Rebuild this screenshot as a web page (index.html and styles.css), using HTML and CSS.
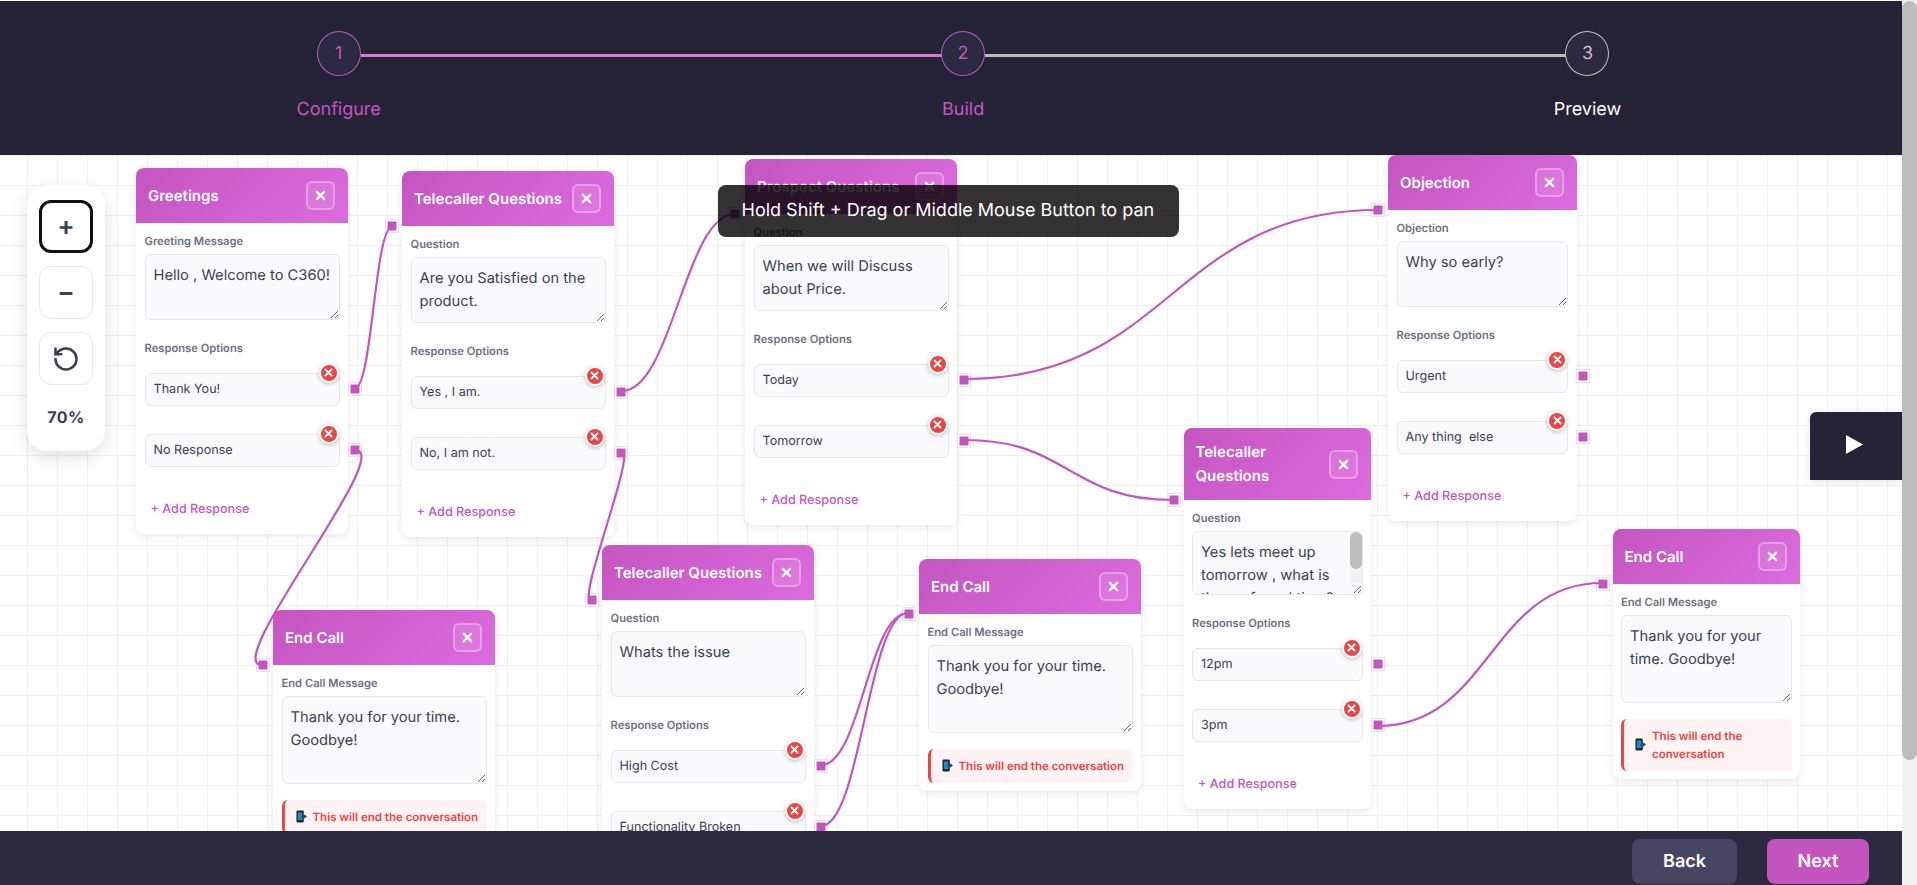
FILE: index.html
```html
<!DOCTYPE html>
<html lang="en">
<head>
    <meta charset="UTF-8">
    <meta name="viewport" content="width=device-width, initial-scale=1.0">
    <title>Call Flow Builder</title>
    <link rel="stylesheet" href="styles.css">
</head>
<body>
    <svg class="sprite" aria-hidden="true">
        <symbol id="icon-x" viewBox="0 0 12 12">
            <path d="M2 2l8 8M10 2l-8 8" fill="none" stroke="currentColor" stroke-width="2.6" stroke-linecap="round"/>
        </symbol>
        <symbol id="icon-phone" viewBox="0 0 12 14">
            <rect x="0.5" y="0.5" width="8" height="13" rx="1.2" fill="#1f2230"/>
            <rect x="2" y="2.5" width="5" height="8.5" fill="#1b8fc4"/>
            <path d="M6 6h3V4.6L12 7l-3 2.4V8H6z" fill="#3a3f4d"/>
        </symbol>
    </svg>

    <div class="page">
        <div class="app">
            <!-- Stepper -->
            <div class="stepper">
                <div class="step step-done">
                    <div class="step-circle">1</div>
                    <div class="step-label">Configure</div>
                </div>
                <div class="step step-active">
                    <div class="step-circle">2</div>
                    <div class="step-label">Build</div>
                </div>
                <div class="step step-todo">
                    <div class="step-circle">3</div>
                    <div class="step-label">Preview</div>
                </div>
            </div>

            <!-- Flow canvas -->
            <div class="canvas">
                <div class="node node-greetings">
                    <div class="node-header">
                        <div class="node-title">Greetings</div>
                        <button class="node-close"><svg class="icon-x"><use href="#icon-x"/></svg></button>
                    </div>
                    <div class="node-body">
                        <label class="field-label">Greeting Message</label>
                        <textarea class="field-text">Hello , Welcome to C360!</textarea>
                        <label class="field-label options-label">Response Options</label>
                        <div class="option">
                            <input class="option-input" type="text" value="Thank You!">
                            <span class="option-remove"><svg class="icon-x-small"><use href="#icon-x"/></svg></span>
                            <span class="port port-out"></span>
                        </div>
                        <div class="option">
                            <input class="option-input" type="text" value="No Response">
                            <span class="option-remove"><svg class="icon-x-small"><use href="#icon-x"/></svg></span>
                            <span class="port port-out"></span>
                        </div>
                        <div class="add-response">+ Add Response</div>
                    </div>
                </div>

                <div class="node node-telecaller-a">
                    <div class="node-header">
                        <span class="port port-in"></span>
                        <div class="node-title">Telecaller Questions</div>
                        <button class="node-close"><svg class="icon-x"><use href="#icon-x"/></svg></button>
                    </div>
                    <div class="node-body">
                        <label class="field-label">Question</label>
                        <textarea class="field-text">Are you Satisfied on the product.</textarea>
                        <label class="field-label options-label">Response Options</label>
                        <div class="option">
                            <input class="option-input" type="text" value="Yes , I am.">
                            <span class="option-remove"><svg class="icon-x-small"><use href="#icon-x"/></svg></span>
                            <span class="port port-out"></span>
                        </div>
                        <div class="option">
                            <input class="option-input" type="text" value="No, I am not.">
                            <span class="option-remove"><svg class="icon-x-small"><use href="#icon-x"/></svg></span>
                            <span class="port port-out"></span>
                        </div>
                        <div class="add-response">+ Add Response</div>
                    </div>
                </div>

                <div class="node node-prospect">
                    <div class="node-header">
                        <span class="port port-in"></span>
                        <div class="node-title">Prospect Questions</div>
                        <button class="node-close"><svg class="icon-x"><use href="#icon-x"/></svg></button>
                    </div>
                    <div class="node-body">
                        <label class="field-label">Question</label>
                        <textarea class="field-text">When we will Discuss about Price.</textarea>
                        <label class="field-label options-label">Response Options</label>
                        <div class="option">
                            <input class="option-input" type="text" value="Today">
                            <span class="option-remove"><svg class="icon-x-small"><use href="#icon-x"/></svg></span>
                            <span class="port port-out"></span>
                        </div>
                        <div class="option">
                            <input class="option-input" type="text" value="Tomorrow">
                            <span class="option-remove"><svg class="icon-x-small"><use href="#icon-x"/></svg></span>
                            <span class="port port-out"></span>
                        </div>
                        <div class="add-response">+ Add Response</div>
                    </div>
                </div>

                <div class="node node-objection">
                    <div class="node-header">
                        <span class="port port-in"></span>
                        <div class="node-title">Objection</div>
                        <button class="node-close"><svg class="icon-x"><use href="#icon-x"/></svg></button>
                    </div>
                    <div class="node-body">
                        <label class="field-label">Objection</label>
                        <textarea class="field-text">Why so early?</textarea>
                        <label class="field-label options-label">Response Options</label>
                        <div class="option">
                            <input class="option-input" type="text" value="Urgent">
                            <span class="option-remove"><svg class="icon-x-small"><use href="#icon-x"/></svg></span>
                            <span class="port port-out"></span>
                        </div>
                        <div class="option">
                            <input class="option-input" type="text" value="Any thing  else">
                            <span class="option-remove"><svg class="icon-x-small"><use href="#icon-x"/></svg></span>
                            <span class="port port-out"></span>
                        </div>
                        <div class="add-response">+ Add Response</div>
                    </div>
                </div>

                <div class="node node-telecaller-b">
                    <div class="node-header">
                        <span class="port port-in"></span>
                        <div class="node-title">Telecaller Questions</div>
                        <button class="node-close"><svg class="icon-x"><use href="#icon-x"/></svg></button>
                    </div>
                    <div class="node-body">
                        <label class="field-label">Question</label>
                        <div class="field-scroll">
                            <textarea class="field-text field-text-short">Yes lets meet up tomorrow , what is the preferred time?</textarea>
                            <div class="field-scrollbar"><div class="field-scrollbar-thumb"></div></div>
                        </div>
                        <label class="field-label options-label">Response Options</label>
                        <div class="option">
                            <input class="option-input" type="text" value="12pm">
                            <span class="option-remove"><svg class="icon-x-small"><use href="#icon-x"/></svg></span>
                            <span class="port port-out"></span>
                        </div>
                        <div class="option">
                            <input class="option-input" type="text" value="3pm">
                            <span class="option-remove"><svg class="icon-x-small"><use href="#icon-x"/></svg></span>
                            <span class="port port-out"></span>
                        </div>
                        <div class="add-response">+ Add Response</div>
                    </div>
                </div>

                <div class="node node-telecaller-c">
                    <div class="node-header">
                        <span class="port port-in"></span>
                        <div class="node-title">Telecaller Questions</div>
                        <button class="node-close"><svg class="icon-x"><use href="#icon-x"/></svg></button>
                    </div>
                    <div class="node-body">
                        <label class="field-label">Question</label>
                        <textarea class="field-text">Whats the issue</textarea>
                        <label class="field-label options-label">Response Options</label>
                        <div class="option">
                            <input class="option-input" type="text" value="High Cost">
                            <span class="option-remove"><svg class="icon-x-small"><use href="#icon-x"/></svg></span>
                            <span class="port port-out"></span>
                        </div>
                        <div class="option">
                            <input class="option-input" type="text" value="Functionality Broken">
                            <span class="option-remove"><svg class="icon-x-small"><use href="#icon-x"/></svg></span>
                            <span class="port port-out"></span>
                        </div>
                        <div class="add-response">+ Add Response</div>
                    </div>
                </div>

                <div class="node node-end-a">
                    <div class="node-header">
                        <span class="port port-in"></span>
                        <div class="node-title">End Call</div>
                        <button class="node-close"><svg class="icon-x"><use href="#icon-x"/></svg></button>
                    </div>
                    <div class="node-body">
                        <label class="field-label">End Call Message</label>
                        <textarea class="field-text field-text-tall">Thank you for your time. Goodbye!</textarea>
                        <div class="end-notice">
                            <svg class="icon-phone"><use href="#icon-phone"/></svg>
                            <span>This will end the conversation</span>
                        </div>
                    </div>
                </div>

                <div class="node node-end-b">
                    <div class="node-header">
                        <span class="port port-in"></span>
                        <div class="node-title">End Call</div>
                        <button class="node-close"><svg class="icon-x"><use href="#icon-x"/></svg></button>
                    </div>
                    <div class="node-body">
                        <label class="field-label">End Call Message</label>
                        <textarea class="field-text field-text-tall">Thank you for your time. Goodbye!</textarea>
                        <div class="end-notice">
                            <svg class="icon-phone"><use href="#icon-phone"/></svg>
                            <span>This will end the conversation</span>
                        </div>
                    </div>
                </div>

                <div class="node node-end-c">
                    <div class="node-header">
                        <span class="port port-in"></span>
                        <div class="node-title">End Call</div>
                        <button class="node-close"><svg class="icon-x"><use href="#icon-x"/></svg></button>
                    </div>
                    <div class="node-body">
                        <label class="field-label">End Call Message</label>
                        <textarea class="field-text field-text-tall">Thank you for your time. Goodbye!</textarea>
                        <div class="end-notice">
                            <svg class="icon-phone"><use href="#icon-phone"/></svg>
                            <span>This will end the conversation</span>
                        </div>
                    </div>
                </div>

                <!-- Connections run over the cards -->
                <svg class="edges" width="1902" height="676">
                    <path d="M355 233 C372 233 375 72 392 72"/>
                    <path d="M355 295 C397 295 220 510 262 510"/>
                    <path d="M622 236 C672 236 685 59 735 59"/>
                    <path d="M622 297 C636 297 577 445 591 445"/>
                    <path d="M965 224 C1171 224 1172 55 1378 55"/>
                    <path d="M965 285 C1069 285 1069 345 1173 345"/>
                    <path d="M821 610 C861 610 868 458 908 458"/>
                    <path d="M821 671 C861 671 868 458 908 458"/>
                    <path d="M1378 571 C1490 571 1490 428 1602 428"/>
                </svg>

                <!-- Zoom controls -->
                <div class="zoom-panel">
                    <button class="zoom-btn zoom-btn-focus">+</button>
                    <button class="zoom-btn">&minus;</button>
                    <button class="zoom-btn">
                        <svg class="icon-reset" viewBox="0 0 24 24"><path d="M3 12a9 9 0 1 0 9-9 9.75 9.75 0 0 0-6.74 2.74L3 8"/><path d="M3 3v5h5"/></svg>
                    </button>
                    <div class="zoom-value">70%</div>
                </div>

                <div class="pan-hint">Hold Shift + Drag or Middle Mouse Button to pan</div>

                <button class="preview-toggle">
                    <svg class="icon-play" viewBox="0 0 17 19"><path d="M0 0l17 9.5L0 19z"/></svg>
                </button>
            </div>

            <!-- Footer -->
            <div class="footer">
                <button class="footer-btn btn-back">Back</button>
                <button class="footer-btn btn-next">Next</button>
            </div>
        </div>

        <div class="page-scrollbar"><div class="page-scrollbar-thumb"></div></div>
    </div>
</body>
</html>
```

FILE: styles.css
```css
* {
    box-sizing: border-box;
}
html, body {
    margin: 0;
    height: 100%;
    overflow: hidden;
}
body {
    font-family: Inter, 'Liberation Sans', sans-serif;
    background-color: white;
    color: #374151;
    text-rendering: geometricPrecision;
}
button, input, textarea {
    font-family: inherit;
    text-rendering: inherit;
}
.sprite {
    display: none;
}

/* page */
.page {
    display: flex;
    height: 885px;
}
.app {
    display: flex;
    flex-direction: column;
    flex: 1;
    min-width: 0;
    margin-top: 1px;
}
.page-scrollbar {
    flex-shrink: 0;
    width: 15px;
    padding-top: 1px;
    background-color: #f1f1f1;
}
.page-scrollbar-thumb {
    height: 759px;
    border-radius: 8px;
    background-color: #bcbcbc;
}

/* stepper */
.stepper {
    display: grid;
    grid-template-columns: repeat(3, 624.4px);
    height: 154px;
    padding-left: 26.5px;
    background-color: #252436;
}
.step {
    position: relative;
    display: flex;
    flex-direction: column;
    align-items: center;
    padding-top: 30px;
}
.step-circle {
    display: flex;
    align-items: center;
    justify-content: center;
    width: 44px;
    height: 45px;
    border: 1px solid #c455bf;
    border-radius: 50%;
    background-color: #2a2a40;
    color: #c455bf;
    font-size: 18px;
}
.step-label {
    margin-top: 22.5px;
    font-size: 18px;
    line-height: 22px;
    color: #c455bf;
}
.step-done::after, .step-active::after {
    content: "";
    position: absolute;
    top: 53px;
    left: calc(50% + 22px);
    width: 581px;
    height: 3px;
    background-color: #d67ad4;
}
.step-active::after {
    background-color: #bdbdb8;
}
.step-todo .step-circle {
    border-color: #c4c4c4;
    color: #c4c4c4;
}
.step-todo .step-label {
    color: white;
}

/* canvas */
.canvas {
    position: relative;
    flex: 1;
    overflow: hidden;
    background-color: white;
    background-image:
        linear-gradient(to right, #f0f0f0 1px, transparent 1px),
        linear-gradient(to bottom, #f0f0f0 1px, transparent 1px);
    background-size: 30px 30px;
    background-position: 27px 0;
}
.edges {
    position: absolute;
    top: 0;
    left: 0;
    pointer-events: none;
}
.edges path {
    fill: none;
    stroke: #c455bf;
    stroke-width: 2.2;
}

/* nodes */
.node {
    position: absolute;
    background: white;
    border-radius: 8px;
    box-shadow: 0 2px 10px rgba(0,0,0,0.1);
}
.node-greetings { left: 136px; top: 13px; width: 212px; }
.node-telecaller-a { left: 402px; top: 16px; width: 212px; }
.node-prospect { left: 745px; top: 4px; width: 212px; }
.node-objection { left: 1388px; top: 0; width: 188.5px; }
.node-telecaller-b { left: 1183.5px; top: 273px; width: 187.5px; }
.node-telecaller-c { left: 602px; top: 390px; width: 212px; }
.node-end-a { left: 273px; top: 455px; width: 222px; }
.node-end-b { left: 919px; top: 404px; width: 222px; }
.node-end-c { left: 1612.5px; top: 374px; width: 187.5px; }

.node-header {
    position: relative;
    display: flex;
    align-items: center;
    justify-content: space-between;
    min-height: 55px;
    padding: 12px 13px 12px 12px;
    border-radius: 8px 8px 0 0;
    background: linear-gradient(135deg, #c455bf, #dc6bdf);
}
.node-title {
    font-size: 15px;
    font-weight: 600;
    line-height: 24px;
    color: white;
}
.node-close {
    display: flex;
    align-items: center;
    justify-content: center;
    flex-shrink: 0;
    width: 29px;
    height: 29px;
    margin-left: 7px;
    padding: 0;
    border: 2px solid rgba(255,255,255,0.3);
    border-radius: 6px;
    background-color: rgba(255,255,255,0.1);
    color: white;
}
.icon-x {
    width: 11px;
    height: 11px;
}
.node-body {
    padding: 12px 8.5px 16px;
}
.field-label {
    display: block;
    margin-bottom: 5.5px;
    font-size: 11.2px;
    font-weight: 600;
    line-height: 13px;
    color: #6b7280;
}
.field-text {
    display: block;
    width: 100%;
    height: 66px;
    padding: 9px 8px 8px;
    border: 1px solid #e5e7eb;
    border-radius: 6px;
    background-color: #f9fafb;
    color: #374151;
    font-size: 14.7px;
    line-height: 23px;
    resize: vertical;
    outline: none;
    overflow: hidden;
}
.field-text-short {
    height: 64px;
    padding-right: 20px;
}
.field-text-tall {
    height: 88px;
}
.field-scroll {
    position: relative;
    margin-bottom: 3.5px;
}
.field-scrollbar {
    position: absolute;
    top: 1px;
    right: 1px;
    width: 12px;
    height: 51px;
    background-color: #f1f1f1;
}
.field-scrollbar-thumb {
    height: 37px;
    border-radius: 6px;
    background-color: #bcbcbc;
}
.options-label {
    margin-top: 22px;
    margin-bottom: 18px;
}
.option {
    position: relative;
    margin-bottom: 27.5px;
}
.option-input {
    display: block;
    width: 100%;
    height: 33.5px;
    padding: 0 8px;
    border: 1px solid #e5e7eb;
    border-radius: 6px;
    background-color: #f9fafb;
    color: #374151;
    font-size: 12.6px;
    outline: none;
}
.option-remove {
    position: absolute;
    top: -10px;
    right: 1px;
    display: flex;
    align-items: center;
    justify-content: center;
    width: 20px;
    height: 20px;
    border: 2px solid white;
    border-radius: 50%;
    background-color: #ef4444;
    color: white;
    box-shadow: 0 1px 4px rgba(0,0,0,0.25);
}
.icon-x-small {
    width: 9px;
    height: 9px;
}
.add-response {
    padding: 7px 0 0 6px;
    font-size: 12.6px;
    font-weight: 500;
    line-height: 16px;
    color: #c455bf;
}
.end-notice {
    display: flex;
    align-items: center;
    gap: 6px;
    margin-top: 16px;
    margin-bottom: -8px;
    padding: 8px 8px 8px 11px;
    border-left: 3px solid #ef4444;
    border-radius: 6px;
    background-color: #fef2f2;
    color: #ef4444;
    font-size: 11.5px;
    font-weight: 600;
    line-height: 18px;
}
.icon-phone {
    flex-shrink: 0;
    width: 11px;
    height: 13px;
}

/* ports */
.port {
    position: absolute;
    width: 14px;
    height: 14px;
    border: 1px solid #f3d9f2;
    background-color: #c455bf;
    box-shadow: inset 0 0 0 1.5px white;
}
.port-in {
    bottom: -7px;
    left: -17px;
}
.port-out {
    top: 50%;
    right: -22px;
    margin-top: -7px;
}

/* overlays */
.zoom-panel {
    position: absolute;
    top: 30px;
    left: 27px;
    display: flex;
    flex-direction: column;
    align-items: center;
    gap: 13px;
    width: 78px;
    height: 266px;
    padding-top: 15px;
    border-radius: 20px;
    background: white;
    box-shadow: 0 6px 20px rgba(0,0,0,0.12);
}
.zoom-btn {
    display: flex;
    align-items: center;
    justify-content: center;
    flex-shrink: 0;
    width: 54px;
    height: 53px;
    padding: 0;
    border: 1px solid #e5e7eb;
    border-radius: 12px;
    background: white;
    color: #374151;
    font-size: 26px;
    font-weight: 600;
}
.zoom-btn-focus {
    border: 3px solid #111111;
}
.icon-reset {
    width: 28px;
    height: 28px;
    fill: none;
    stroke: #374151;
    stroke-width: 2.2;
    stroke-linecap: round;
    stroke-linejoin: round;
}
.zoom-value {
    margin-top: 9px;
    font-size: 16px;
    font-weight: 700;
    letter-spacing: 0.5px;
    color: #374151;
}
.pan-hint {
    position: absolute;
    top: 30px;
    left: 717.5px;
    width: 461px;
    height: 52px;
    padding: 0 24px;
    border-radius: 8px;
    background-color: rgba(0,0,0,0.8);
    color: white;
    font-size: 18px;
    line-height: 52px;
    white-space: nowrap;
}
.preview-toggle {
    position: absolute;
    top: 257px;
    right: 0;
    width: 92px;
    height: 68px;
    padding: 0 3px 0 0;
    border: none;
    border-radius: 6px 0 0 0;
    background-color: #252436;
    box-shadow: 0 2px 10px rgba(0,0,0,0.1);
}
.icon-play {
    width: 17px;
    height: 19px;
    fill: white;
}

/* footer */
.footer {
    display: flex;
    justify-content: flex-end;
    gap: 30px;
    height: 54px;
    padding: 8px 33px 1px 0;
    background-color: #2b2a40;
}
.footer-btn {
    height: 45px;
    padding: 0 30px;
    border: none;
    border-radius: 8px;
    color: white;
    font-size: 18px;
    font-weight: 600;
}
.btn-back {
    width: 105px;
    background-color: #464662;
}
.btn-next {
    width: 102px;
    background-color: #c455bf;
}
```
